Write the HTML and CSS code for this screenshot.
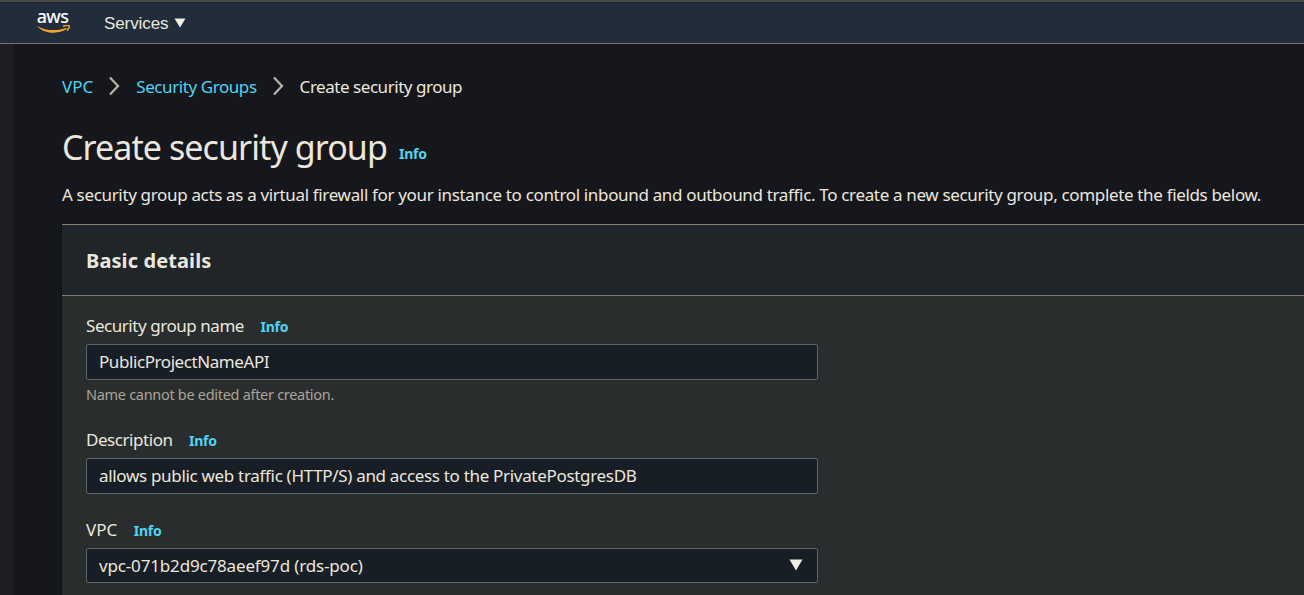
FILE: index.html
```html
<!DOCTYPE html>
<html lang="en">
<head>
<meta charset="utf-8">
<title>Create security group</title>
<link rel="stylesheet" href="styles.css">
</head>
<body>
<header class="topbar">
  <div class="logo">
    <span class="logo-text">aws</span>
    <svg class="logo-smile" width="35" height="9" viewBox="0 0 35 9"><path d="M.6.900C9.500 5.600 21.500 6.600 30.300 2.700L31 4.100C22 9.600 8.500 9 .6.900z" fill="#f5a32a"/><path d="M27 1.200C30 .2 32.700.1 33.200.9 33.600 1.800 32.500 4.500 31 5.800" fill="none" stroke="#f5a32a" stroke-width="1.500"/></svg>
  </div>
  <div class="services"><span>Services</span><svg width="12" height="10" viewBox="0 0 12 10"><path d="M.5.500h11L6 9.500z" fill="#f2ede4"/></svg></div>
</header>
<div class="shell">
  <aside class="rail"></aside>
  <main class="content">
    <nav class="crumbs">
      <a class="crumb-vpc">VPC</a>
      <svg class="chevron" width="12" height="20" viewBox="0 0 12 20"><path d="M1 1.500l8 8.500-8 8.500" fill="none" stroke="#b9b0a4" stroke-width="2.300"/></svg>
      <a class="crumb-groups">Security Groups</a>
      <svg class="chevron" width="12" height="20" viewBox="0 0 12 20"><path d="M1 1.500l8 8.500-8 8.500" fill="none" stroke="#b9b0a4" stroke-width="2.300"/></svg>
      <span class="crumb-current">Create security group</span>
    </nav>
    <div class="heading"><h1>Create security group</h1><a class="info">Info</a></div>
    <p class="intro">A security group acts as a virtual firewall for your instance to control inbound and outbound traffic. To create a new security group, complete the fields below.</p>
    <section class="panel">
      <div class="panel-head"><h2>Basic details</h2></div>
      <div class="panel-body">
        <div class="field field-name">
          <div class="label"><span>Security group name</span><a class="info">Info</a></div>
          <div class="control"><span>PublicProjectNameAPI</span></div>
          <div class="hint">Name cannot be edited after creation.</div>
        </div>
        <div class="field field-desc">
          <div class="label"><span>Description</span><a class="info">Info</a></div>
          <div class="control"><span>allows public web traffic (HTTP/S) and access to the PrivatePostgresDB</span></div>
        </div>
        <div class="field field-vpc">
          <div class="label"><span>VPC</span><a class="info">Info</a></div>
          <div class="control select"><span>vpc-071b2d9c78aeef97d (rds-poc)</span><svg class="caret" width="14" height="12" viewBox="0 0 14 12"><path d="M.5.500h13L7 11.500z" fill="#f2ede4"/></svg></div>
        </div>
      </div>
    </section>
  </main>
</div>
</body>
</html>
```
FILE: styles.css
```css
* { box-sizing: border-box; }
body { margin: 0; height: 595px; overflow: hidden; background: #16171d; color: #ece7dd; font: 17px/24px "Noto Sans", sans-serif; display: flex; flex-direction: column; }
.topbar { flex: none; height: 44px; background: #212d3b; border-top: 2px solid #4b4a4a; border-bottom: 1px solid #77746f; display: flex; align-items: flex-start; padding-left: 36px; box-shadow: inset 0 1px #222328; }
.logo { width: 35px; height: 36px; display: flex; flex-direction: column; align-items: center; padding-top: 5px; }
.logo-text { font: 500 18px/18px "Noto Sans", sans-serif; letter-spacing: -.7px; color: #fff; padding-right: 2px; }
.logo-smile { display: block; flex: none; }
.services { margin-left: 33px; padding-top: 10px; display: flex; align-items: center; gap: 6px; font: 17px/24px "Liberation Sans", sans-serif; letter-spacing: -.1px; }
.services svg { position: relative; top: -1px; }
.shell { flex: 1; display: flex; min-height: 0; }
.rail { width: 14px; flex: none; background: #1d1e1f; }
.content { flex: 1; min-width: 0; padding: 31px 0 0 48px; display: flex; flex-direction: column; }
.crumbs { display: flex; align-items: center; height: 24px; flex: none; white-space: nowrap; }
.crumbs a, .info { color: #4fd4f2; }
.crumb-groups { letter-spacing: -.42px; }
.crumb-current { letter-spacing: -.46px; }
.chevron { margin: 0 15px 0 16px; flex: none; position: relative; top: -1px; }
.heading { display: flex; align-items: baseline; height: 46px; margin-top: 25px; flex: none; white-space: nowrap; }
h1 { margin: 0; font-size: 34px; line-height: 46px; font-weight: 400; width: 325px; letter-spacing: -.92px; }
.info { font-size: 14px; font-weight: 700; letter-spacing: -.25px; }
.heading .info { margin-left: 12px; position: relative; top: -1px; }
.intro { margin: 13px 0 17px; height: 24px; white-space: nowrap; flex: none; letter-spacing: -.337px; }
.panel { flex: 1; min-height: 0; border-top: 1px solid #877d70; background: #292d2d; box-shadow: -1px 0 #101116; }
.panel-head { height: 71px; padding: 24px; background: #1f2528; border-bottom: 1px solid #817b70; }
h2 { margin: 0; font-size: 20px; line-height: 24px; font-weight: 700; letter-spacing: .1px; }
.panel-body { padding: 18px 24px 0; }
.label { height: 24px; display: flex; align-items: baseline; margin-bottom: 6px; white-space: nowrap; }
.label .info { margin-left: 16.500px; }
.field-name .label span, .field-desc .label span { letter-spacing: -.45px; }
.control { width: 732px; height: 36px; border: 1px solid #5c636a; border-radius: 2px; background: #181e26; padding: 0 14px 0 12px; display: flex; align-items: center; justify-content: space-between; white-space: nowrap; }
.field-name .control { letter-spacing: -.42px; }
.field-desc .control { letter-spacing: -.315px; }
.select { height: 35px; letter-spacing: -.16px; }
.caret { position: relative; top: -1px; }
.hint { font-size: 14.500px; line-height: 20px; color: #aba498; margin-top: 4px; height: 20px; letter-spacing: -.3px; }
.field-name { margin-bottom: 24px; }
.field-desc { margin-bottom: 24px; }
```
